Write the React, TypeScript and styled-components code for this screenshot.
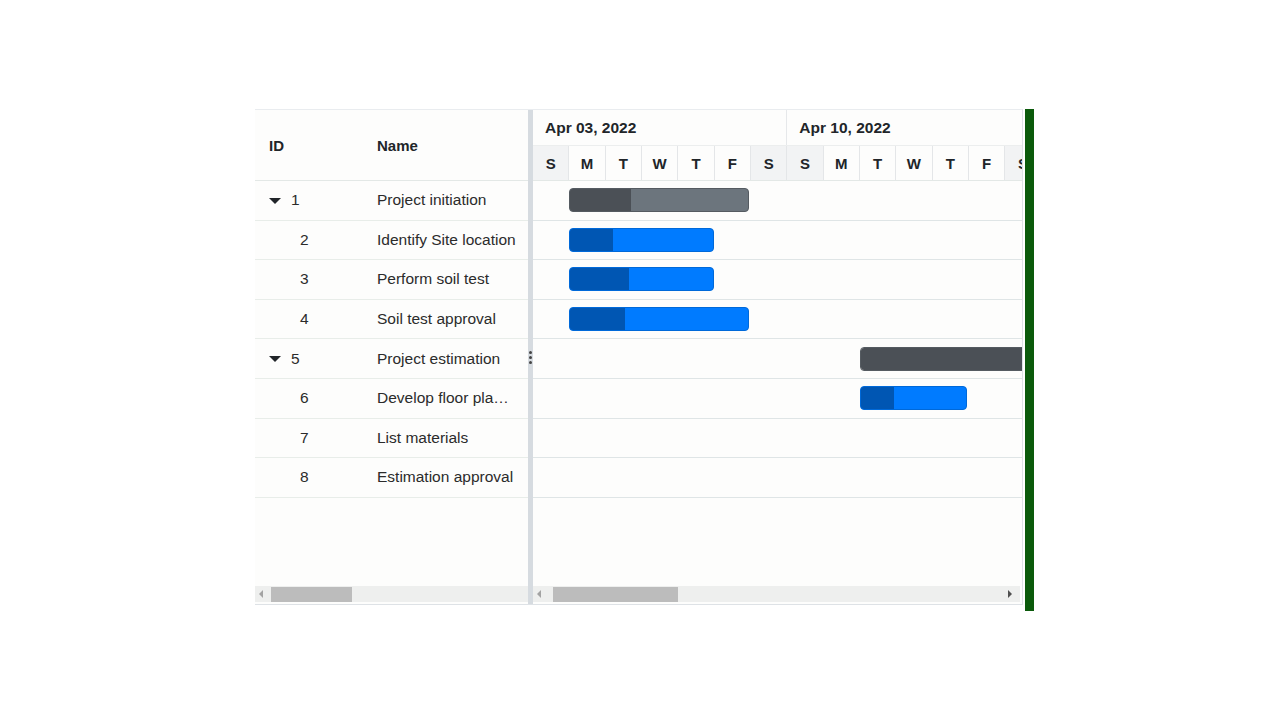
import styled, { createGlobalStyle } from "styled-components";

const DAY = 36.33;
const ROW = 39.6;

interface Task {
  id: number;
  name: string;
  parent?: boolean;
  start?: number;
  days?: number;
  progress?: number;
}

const tasks: Task[] = [
  { id: 1, name: "Project initiation", parent: true, start: 1, days: 4.95, progress: 0.34 },
  { id: 2, name: "Identify Site location", start: 1, days: 3.97, progress: 0.3 },
  { id: 3, name: "Perform soil test", start: 1, days: 3.97, progress: 0.41 },
  { id: 4, name: "Soil test approval", start: 1, days: 4.95, progress: 0.31 },
  { id: 5, name: "Project estimation", parent: true, start: 9, days: 5, progress: 1 },
  { id: 6, name: "Develop floor plan for estimation", start: 9, days: 2.95, progress: 0.31 },
  { id: 7, name: "List materials" },
  { id: 8, name: "Estimation approval" },
];

const days = ["S", "M", "T", "W", "T", "F", "S", "S", "M", "T", "W", "T", "F", "S"];

const GlobalStyle = createGlobalStyle`
  body {
    margin: 0;
    background: #fff;
    font-family: "Liberation Sans", Arial, sans-serif;
    color: #212529;
  }
`;

const Page = styled.div`
  width: 1280px;
  height: 720px;
  padding: 109px 0 0 255px;
  box-sizing: border-box;
  display: flex;
  align-items: flex-start;
  gap: 2px;
`;

const Gantt = styled.div`
  display: flex;
  width: 768px;
  height: 496px;
  box-sizing: border-box;
  border-top: 1px solid #e9ecef;
  border-bottom: 1px solid #dee2e6;
  border-right: 1px solid #dee2e6;
  background: #fdfdfc;
  overflow: hidden;
`;

const GreenEdge = styled.div`
  width: 9px;
  height: 502px;
  background: #0b5a0b;
`;

const GridPanel = styled.div`
  width: 273px;
  display: flex;
  flex-direction: column;
`;

const GridHeader = styled.div`
  height: 71px;
  box-sizing: border-box;
  display: flex;
  align-items: center;
  border-bottom: 1px solid #e3e8e6;
  font-weight: bold;
  font-size: 15px;
  color: #212529;
`;

const IdCell = styled.div<{ $child?: boolean }>`
  width: 110px;
  box-sizing: border-box;
  padding-left: ${(p) => (p.$child ? "45px" : "14px")};
  display: flex;
  align-items: center;
  gap: 10px;
`;

const NameCell = styled.div`
  flex: 1;
  min-width: 0;
  padding-left: 12px;
  padding-right: 11px;
  white-space: nowrap;
  overflow: hidden;
  text-overflow: ellipsis;
`;

const GridRow = styled.div`
  height: ${ROW}px;
  box-sizing: border-box;
  display: flex;
  align-items: center;
  border-bottom: 1px solid #e8ede9;
  font-size: 15.5px;
  color: #2b2b2b;
`;

const Caret = styled.span`
  width: 0;
  height: 0;
  border-left: 6px solid transparent;
  border-right: 6px solid transparent;
  border-top: 6px solid #212529;
  margin-top: 1px;
`;

const Filler = styled.div`
  flex: 1;
`;

const ScrollBar = styled.div`
  height: 16px;
  margin-bottom: 2px;
  background: #eeefee;
  display: flex;
  align-items: center;
  padding: 0 4px;
  gap: 4px;
`;

const Arrow = styled.span<{ $dir: "left" | "right"; $dark?: boolean }>`
  width: 0;
  height: 0;
  border-top: 4px solid transparent;
  border-bottom: 4px solid transparent;
  ${(p) =>
    p.$dir === "left"
      ? `border-right: 4px solid ${p.$dark ? "#505050" : "#a3a3a3"};`
      : `border-left: 4px solid ${p.$dark ? "#505050" : "#a3a3a3"};`}
`;

const Thumb = styled.div<{ $w: number }>`
  width: ${(p) => p.$w}px;
  height: 15px;
  background: #bcbcbc;
  margin-left: 4px;
`;

const Splitter = styled.div`
  width: 5px;
  background: #d6dbe0;
  position: relative;
`;

const DragDots = styled.div`
  position: absolute;
  left: 1px;
  top: 241px;
  display: flex;
  flex-direction: column;
  gap: 2px;
  span {
    width: 3px;
    height: 3px;
    border-radius: 50%;
    background: #444;
  }
`;

const ChartPanel = styled.div`
  flex: 1;
  display: flex;
  flex-direction: column;
  overflow: hidden;
`;

const WeekRow = styled.div`
  height: 36px;
  box-sizing: border-box;
  display: flex;
  border-bottom: 1px solid #eceeee;
`;

const WeekCell = styled.div`
  width: ${DAY * 7}px;
  flex-shrink: 0;
  box-sizing: border-box;
  border-right: 1px solid #e6e8ea;
  padding-left: 12px;
  display: flex;
  align-items: center;
  font-weight: bold;
  font-size: 15.5px;
  color: #212529;
`;

const DayRow = styled.div`
  height: 35px;
  box-sizing: border-box;
  display: flex;
  border-bottom: 1px solid #e3e8e6;
`;

const DayCell = styled.div<{ $weekend: boolean }>`
  width: ${DAY}px;
  flex-shrink: 0;
  box-sizing: border-box;
  border-right: 1px solid #e4e6e8;
  background: ${(p) => (p.$weekend ? "#f2f3f4" : "transparent")};
  display: flex;
  align-items: center;
  justify-content: center;
  font-weight: bold;
  font-size: 15px;
  color: #212529;
`;

const ChartRow = styled.div`
  height: ${ROW}px;
  box-sizing: border-box;
  display: flex;
  align-items: center;
  border-bottom: 1px solid #dfe5e6;
`;

const Bar = styled.div<{ $parent?: boolean }>`
  height: 24px;
  box-sizing: border-box;
  border-radius: 4px;
  overflow: hidden;
  flex-shrink: 0;
  display: flex;
  background: ${(p) => (p.$parent ? "#6c757d" : "#007bff")};
  border: 1px solid ${(p) => (p.$parent ? "#555b61" : "#0069d9")};
`;

const Progress = styled.div<{ $parent?: boolean }>`
  height: 100%;
  background: ${(p) => (p.$parent ? "#4b5056" : "#0056b3")};
`;

const ChartScroll = styled(ScrollBar)`
  justify-content: space-between;
  padding: 0 8px 0 4px;
  margin-right: 2px;
`;

const ScrollStart = styled.div`
  display: flex;
  align-items: center;
  gap: 8px;
`;

function App() {
  return (
    <>
      <GlobalStyle />
      <Page>
        <Gantt>
          <GridPanel>
            <GridHeader>
              <IdCell>ID</IdCell>
              <NameCell>Name</NameCell>
            </GridHeader>
            {tasks.map((t) => (
              <GridRow key={t.id}>
                <IdCell $child={!t.parent}>
                  {t.parent && <Caret />}
                  {t.id}
                </IdCell>
                <NameCell>{t.name}</NameCell>
              </GridRow>
            ))}
            <Filler />
            <ScrollBar>
              <Arrow $dir="left" />
              <Thumb $w={81} />
            </ScrollBar>
          </GridPanel>
          <Splitter>
            <DragDots>
              <span />
              <span />
              <span />
            </DragDots>
          </Splitter>
          <ChartPanel>
            <WeekRow>
              <WeekCell>Apr 03, 2022</WeekCell>
              <WeekCell>Apr 10, 2022</WeekCell>
            </WeekRow>
            <DayRow>
              {days.map((d, i) => (
                <DayCell key={i} $weekend={d === "S"}>
                  {d}
                </DayCell>
              ))}
            </DayRow>
            {tasks.map((t) => (
              <ChartRow key={t.id}>
                {t.start !== undefined && (
                  <Bar
                    $parent={t.parent}
                    style={{ marginLeft: t.start * DAY, width: (t.days ?? 0) * DAY }}
                  >
                    <Progress $parent={t.parent} style={{ width: `${(t.progress ?? 0) * 100}%` }} />
                  </Bar>
                )}
              </ChartRow>
            ))}
            <Filler />
            <ChartScroll>
              <ScrollStart>
                <Arrow $dir="left" />
                <Thumb $w={125} />
              </ScrollStart>
              <Arrow $dir="right" $dark />
            </ChartScroll>
          </ChartPanel>
        </Gantt>
        <GreenEdge />
      </Page>
    </>
  );
}

export default App;
